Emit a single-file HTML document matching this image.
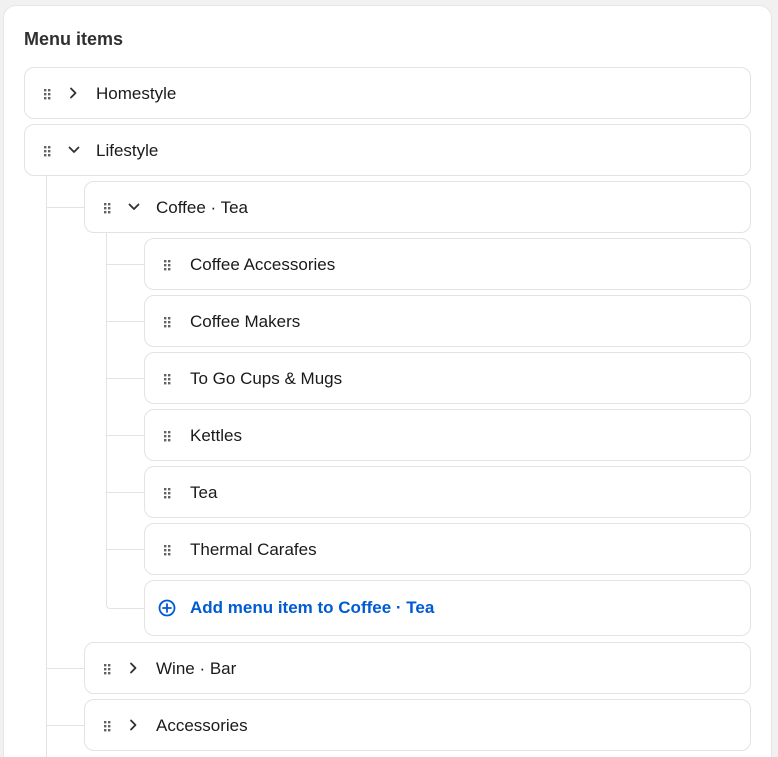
<!DOCTYPE html>
<html><head><meta charset="utf-8"><style>
html,body{margin:0;padding:0;width:778px;height:757px;overflow:hidden;}
body{background:#f1f1f1;position:relative;font-family:"Liberation Sans",sans-serif;color:#303030;}
.card{position:absolute;left:4px;top:6px;width:767px;height:780px;background:#fff;border-radius:12px;box-shadow:0 0 0 1px #e6e6e6;}
h2{position:absolute;left:24px;top:29px;margin:0;font-size:18px;font-weight:bold;color:#303030;}
.row{position:absolute;right:27px;height:50px;border:1px solid #e3e3e3;border-radius:10px;background:#fff;box-sizing:content-box;}
.ln{position:absolute;background:#e3e3e3;}
svg{position:absolute;}
.t{position:absolute;font-size:17px;color:#1a1a1a;}
</style></head><body>
<div class="card"></div>
<h2>Menu items</h2>

<div class="ln" style="left:46px;top:176px;width:1px;height:581px"></div>
<div class="ln" style="left:46px;top:207px;width:38px;height:1px"></div>
<div class="ln" style="left:46px;top:668px;width:38px;height:1px"></div>
<div class="ln" style="left:46px;top:725px;width:38px;height:1px"></div>
<div style="position:absolute;left:106px;top:233px;width:38px;height:375px;border-left:1px solid #e3e3e3;border-bottom:1px solid #e3e3e3;border-bottom-left-radius:4px;"></div>
<div class="ln" style="left:106px;top:264px;width:38px;height:1px"></div>
<div class="ln" style="left:106px;top:321px;width:38px;height:1px"></div>
<div class="ln" style="left:106px;top:378px;width:38px;height:1px"></div>
<div class="ln" style="left:106px;top:435px;width:38px;height:1px"></div>
<div class="ln" style="left:106px;top:492px;width:38px;height:1px"></div>
<div class="ln" style="left:106px;top:549px;width:38px;height:1px"></div>

<div id="rows"></div>
<script>
var dots='<g fill="#616161"><rect x="0" y="0" width="2.4" height="2.4"/><rect x="4" y="0" width="2.4" height="2.4"/><rect x="0" y="4" width="2.4" height="2.4"/><rect x="4" y="4" width="2.4" height="2.4"/><rect x="0" y="8" width="2.4" height="2.4"/><rect x="4" y="8" width="2.4" height="2.4"/></g>';
var rows=[
[24,67,'Homestyle','r'],[24,124,'Lifestyle','d'],[84,181,'Coffee · Tea','d'],
[144,238,'Coffee Accessories',''],[144,295,'Coffee Makers',''],[144,352,'To Go Cups &amp; Mugs',''],
[144,409,'Kettles',''],[144,466,'Tea',''],[144,523,'Thermal Carafes',''],
[84,642,'Wine · Bar','r'],[84,699,'Accessories','r']];
var h='';
rows.forEach(function(r){
 var x=r[0],y=r[1];
 h+='<div class="row" style="left:'+x+'px;top:'+y+'px"></div>';
 h+='<svg style="left:'+(x+20)+'px;top:'+(y+22)+'px" width="7" height="11">'+dots+'</svg>';
 if(r[3]){
  var p=r[3]=='r'?'M3 2.5 L7.5 7 L3 11.5':'M1.5 4.5 L6 9 L10.5 4.5';
  h+='<svg style="left:'+(x+44)+'px;top:'+(y+19)+'px" width="12" height="14"><path d="'+p+'" fill="none" stroke="#303030" stroke-width="1.8" stroke-linecap="round" stroke-linejoin="round"/></svg>';
  h+='<div class="t" style="left:'+(x+72)+'px;top:'+(y+17)+'px">'+r[2]+'</div>';
 } else {
  h+='<div class="t" style="left:'+(x+46)+'px;top:'+(y+17)+'px">'+r[2]+'</div>';
 }
});
document.getElementById('rows').innerHTML=h;
</script>
<div class="row" style="left:144px;top:580px;height:54px"></div>
<svg style="left:158px;top:599px" width="18" height="18"><circle cx="9" cy="9" r="7.5" fill="none" stroke="#005bd3" stroke-width="1.8"/><path d="M9 5V13M5 9H13" stroke="#005bd3" stroke-width="1.8" stroke-linecap="round"/></svg>
<div style="position:absolute;left:190px;top:598px;font-size:17px;font-weight:bold;color:#005bd3">Add menu item to Coffee · Tea</div>
</body></html>
